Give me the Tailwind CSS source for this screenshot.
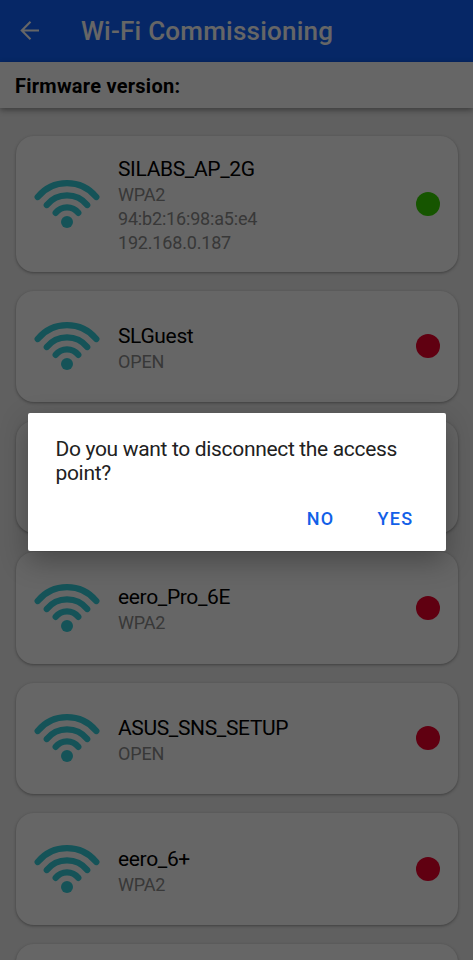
<!DOCTYPE html>
<html lang="en">
<head>
<meta charset="utf-8">
<title>Wi-Fi Commissioning</title>
<script src="https://cdn.jsdelivr.net/npm/@tailwindcss/browser@4"></script>
</head>
<body class="font-['Roboto',sans-serif]">
<svg class="hidden">
  <symbol id="wifi" viewBox="0 0 66 48">
    <g fill="none" stroke="currentColor" stroke-width="6.3" stroke-linecap="round">
      <path d="M3.7 17A38 38 0 0 1 62.3 17"/>
      <path d="M12.8 25A26 26 0 0 1 53.2 25"/>
      <path d="M21.7 32.8A14.5 14.5 0 0 1 44.3 32.8"/>
    </g>
    <circle cx="33" cy="42" r="6" fill="currentColor"/>
  </symbol>
</svg>
<div class="relative flex h-[960px] w-[473px] flex-col overflow-hidden bg-[#efefef]">
  <header class="flex h-[62px] shrink-0 items-center bg-[#0f62fe] pl-5 text-white">
    <svg class="h-[20px] w-[20px]" viewBox="0 0 20 20" fill="none" stroke="currentColor" stroke-width="2.1"><path d="M19 9.5H2M10.5 0.8L1.8 9.5l8.7 8.7"/></svg>
    <h1 class="ml-[41px] text-[26px] font-medium leading-none tracking-[0.23px]">Wi-Fi Commissioning</h1>
  </header>
  <div class="flex h-[46px] shrink-0 items-center bg-white pl-[15px] pt-[2px] text-[20px] font-bold leading-none tracking-[0.25px] text-black shadow-[0_2px_6px_rgba(0,0,0,0.4)]">Firmware version:</div>
  <main class="flex flex-col gap-[19px] px-[15.5px] pt-[27.5px]">
    <article class="flex h-[136px] shrink-0 items-center rounded-[18px] bg-white pl-[18.5px] pr-[18px] shadow-[0_1px_3px_rgba(0,0,0,0.35)]">
      <svg class="h-12 w-[66px] text-[#36d0dc]"><use href="#wifi"/></svg>
      <div class="ml-[18px] flex-1 pt-1 text-[18px] leading-6 tracking-[-0.18px] text-[#8c8c8c]"><h2 class="text-[21px] leading-[27px] tracking-[-0.35px] text-black">SILABS_AP_2G</h2><p>WPA2</p><p>94:b2:16:98:a5:e4</p><p>192.168.0.187</p></div>
      <span class="size-6 rounded-full bg-[#37d400]"></span>
    </article>
    <article class="flex h-[111.7px] shrink-0 items-center rounded-[18px] bg-white pl-[18.5px] pr-[18px] shadow-[0_1px_3px_rgba(0,0,0,0.35)]">
      <svg class="h-12 w-[66px] text-[#36d0dc]"><use href="#wifi"/></svg>
      <div class="ml-[18px] flex-1 pt-1 text-[18px] leading-6 tracking-[-0.18px] text-[#8c8c8c]"><h2 class="text-[21px] leading-[27px] tracking-[-0.35px] text-black">SLGuest</h2><p>OPEN</p></div>
      <span class="size-6 rounded-full bg-[#f0002c]"></span>
    </article>
    <article class="h-[111.7px] shrink-0 rounded-[18px] bg-white shadow-[0_1px_3px_rgba(0,0,0,0.35)]"></article>
    <article class="flex h-[111.7px] shrink-0 items-center rounded-[18px] bg-white pl-[18.5px] pr-[18px] shadow-[0_1px_3px_rgba(0,0,0,0.35)]">
      <svg class="h-12 w-[66px] text-[#36d0dc]"><use href="#wifi"/></svg>
      <div class="ml-[18px] flex-1 pt-1 text-[18px] leading-6 tracking-[-0.18px] text-[#8c8c8c]"><h2 class="text-[21px] leading-[27px] tracking-[-0.35px] text-black">eero_Pro_6E</h2><p>WPA2</p></div>
      <span class="size-6 rounded-full bg-[#f0002c]"></span>
    </article>
    <article class="flex h-[111.7px] shrink-0 items-center rounded-[18px] bg-white pl-[18.5px] pr-[18px] shadow-[0_1px_3px_rgba(0,0,0,0.35)]">
      <svg class="h-12 w-[66px] text-[#36d0dc]"><use href="#wifi"/></svg>
      <div class="ml-[18px] flex-1 pt-1 text-[18px] leading-6 tracking-[-0.18px] text-[#8c8c8c]"><h2 class="text-[21px] leading-[27px] tracking-[-0.35px] text-black">ASUS_SNS_SETUP</h2><p>OPEN</p></div>
      <span class="size-6 rounded-full bg-[#f0002c]"></span>
    </article>
    <article class="flex h-[111.7px] shrink-0 items-center rounded-[18px] bg-white pl-[18.5px] pr-[18px] shadow-[0_1px_3px_rgba(0,0,0,0.35)]">
      <svg class="h-12 w-[66px] text-[#36d0dc]"><use href="#wifi"/></svg>
      <div class="ml-[18px] flex-1 pt-1 text-[18px] leading-6 tracking-[-0.18px] text-[#8c8c8c]"><h2 class="text-[21px] leading-[27px] tracking-[-0.35px] text-black">eero_6+</h2><p>WPA2</p></div>
      <span class="size-6 rounded-full bg-[#f0002c]"></span>
    </article>
    <article class="h-[111.7px] shrink-0 rounded-[18px] bg-white shadow-[0_1px_3px_rgba(0,0,0,0.35)]"></article>
  </main>
  <div class="absolute inset-0 flex items-center justify-center bg-black/60 pt-1">
    <div role="dialog" class="flex h-[138px] w-[418px] flex-col rounded-[2px] bg-white pl-7 pr-8 pt-6 shadow-[0_10px_28px_rgba(0,0,0,0.3)]">
      <p class="whitespace-nowrap text-[21px] leading-6 tracking-[-0.33px] text-[#212121]">Do you want to disconnect the access<br>point?</p>
      <div class="mt-[22px] flex justify-end gap-[43px] text-[18px] font-medium leading-6 tracking-[1.3px] text-[#1260e8]"><button>NO</button><button>YES</button></div>
    </div>
  </div>
</div>
</body>
</html>
